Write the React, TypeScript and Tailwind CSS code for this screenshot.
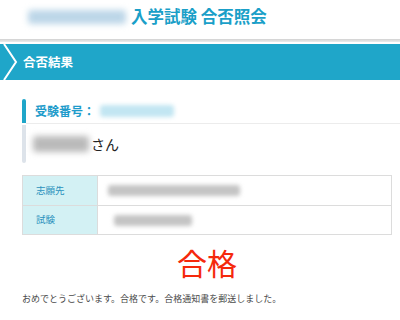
import React from "react";

interface InfoRow {
  label: string;
  width: string;
  indent: string;
}

// values are masked in the screenshot, so they are drawn as blurred blocks
const rows: InfoRow[] = [
  { label: "志願先", width: "w-[132px]", indent: "ml-[10px]" },
  { label: "試験", width: "w-[78px]", indent: "ml-[16px]" },
];

const App: React.FC = () => {
  return (
    <div className="w-[400px] h-[320px] bg-white overflow-hidden font-['Noto_Sans_CJK_JP',sans-serif]">
      {/* header */}
      <div className="h-[33px] flex items-center pl-[28px] gap-[5px]">
        <div className="h-[14px] w-[98px] bg-[#bcd6e8] rounded-[3px] blur-[3px]" />
        <h1 className="text-[16.5px] leading-none font-bold text-[#1a9fc8] whitespace-nowrap">
          入学試験 合否照会
        </h1>
      </div>
      <div className="mt-[6px] h-[3px] bg-gradient-to-b from-[#d2d2d2] to-[#ececec]" />

      {/* section banner */}
      <div className="mt-[2px] h-[36px] bg-[#1fa6c9] flex items-center">
        <svg width="22" height="36" viewBox="0 0 22 36" className="shrink-0">
          <polyline
            points="4,0 16,18 4,36"
            fill="none"
            stroke="#ffffff"
            strokeWidth="2"
          />
        </svg>
        <span className="ml-[1px] text-[12.5px] font-bold text-white leading-none">
          合否結果
        </span>
      </div>

      {/* examinee card */}
      <div className="mt-[19px] ml-[22px] flex flex-col">
        <div className="flex h-[25px]">
          <div className="w-[4px] bg-[#1fa6c9] rounded-t-[2px] mb-[1px]" />
          <div className="flex-1 flex items-center pl-[9px] border-b border-[#ececec]">
            <span className="text-[12px] font-bold text-[#1f9ccb] leading-none">
              受験番号：
            </span>
            <div className="ml-[5px] h-[12px] w-[74px] bg-[#c2e6f2] rounded-[3px] blur-[2px]" />
          </div>
        </div>
        <div className="flex h-[39px] pt-[1px]">
          <div className="w-[4px] bg-[#dde3ea] rounded-b-[2px]" />
          <div className="flex-1 flex items-center pl-[7px]">
            <div className="h-[16px] w-[56px] bg-[#bababa] rounded-[3px] blur-[3px]" />
            <span className="ml-[2px] text-[14px] text-[#222] leading-none">
              さん
            </span>
          </div>
        </div>
      </div>

      {/* info table */}
      <div className="mt-[12px] ml-[22px] w-[370px] border border-[#dcdcdc]">
        {rows.map((row, index) => (
          <div
            key={index}
            className={`flex h-[29px] ${index > 0 ? "border-t border-[#dcdcdc]" : ""}`}
          >
            <div className="w-[75px] bg-[#d3f1f4] border-r border-[#dcdcdc] flex items-center pl-[13px]">
              <span className="text-[9.5px] text-[#2b92bd] leading-none">
                {row.label}
              </span>
            </div>
            <div className="flex-1 flex items-center">
              <div
                className={`${row.indent} ${row.width} h-[11px] bg-[#c4c4c4] rounded-[3px] blur-[2px]`}
              />
            </div>
          </div>
        ))}
      </div>

      {/* result */}
      <div className="mt-[8px] ml-[22px] w-[370px] h-[38px] flex items-center justify-center">
        <span className="text-[30px] leading-none text-[#f5290c]">合格</span>
      </div>

      <p className="mt-[12px] ml-[22px] text-[9px] leading-[12px] text-[#4a4a4a] whitespace-nowrap">
        おめでとうございます。合格です。合格通知書を郵送しました。
      </p>
    </div>
  );
};

export default App;
